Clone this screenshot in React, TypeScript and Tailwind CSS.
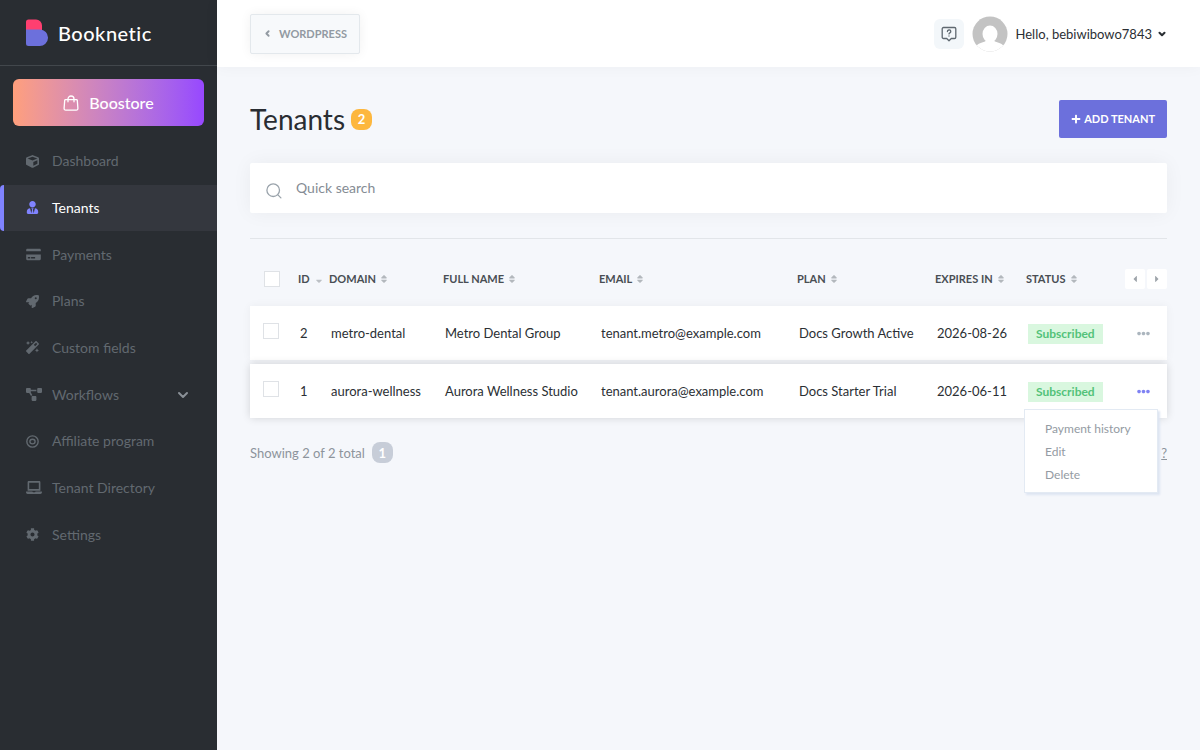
import type { ReactNode } from "react";
import { FaCube, FaUserTie, FaCreditCard, FaRocket, FaMagic, FaProjectDiagram, FaLaptop, FaCog, FaPlus, FaSort, FaSortDown, FaCaretLeft, FaCaretRight, FaEllipsisH } from "react-icons/fa";
import { ChevronDown, ChevronLeft } from "lucide-react";

const TargetIcon = () => (
  <svg viewBox="0 0 14 14" className="size-[13px]" fill="none" stroke="currentColor" strokeWidth="1.5" aria-hidden="true">
    <circle cx="7" cy="7" r="6.1" />
    <ellipse cx="7" cy="7" rx="2.8" ry="2.5" />
  </svg>
);

const BagIcon = () => (
  <svg viewBox="0 0 16 16" className="size-4" fill="none" stroke="currentColor" strokeWidth="1.3" strokeLinecap="round" strokeLinejoin="round" aria-hidden="true">
    <path d="M2.600 4.600h10.800q.8 0 .9.800l.6 7.800q.1 1.900-1.700 1.900H2.800q-1.800 0-1.700-1.900l.6-7.800q.1-.8.900-.8z" />
    <path d="M5 6.800V4a3 3 0 0 1 6 0v2.800" />
  </svg>
);

const Logo = () => (
  <svg viewBox="0 0 22 28" className="h-7 w-[22px]" aria-hidden="true">
    <path d="M0 3a2.500 2.500 0 0 1 2.500-2.500H10a6 6 0 0 1 6 6V12H0z" fill="#ff3f70" />
    <path d="M0 10.500h14A8.200 8.200 0 0 1 13.500 27H2.500A2.500 2.500 0 0 1 0 24.500z" fill="#6c70dc" />
  </svg>
);

const HelpIcon = () => (
  <svg viewBox="0 0 16 16" className="size-4" fill="none" stroke="currentColor" strokeWidth="1.300" strokeLinecap="round" strokeLinejoin="round" aria-hidden="true">
    <path d="M2.500 1.500h11a1.300 1.300 0 0 1 1.300 1.300v8.400a1.300 1.300 0 0 1-1.300 1.300H10.300L8 14.800l-2.300-2.300H2.500a1.300 1.300 0 0 1-1.300-1.300V2.800a1.300 1.300 0 0 1 1.300-1.300z" />
    <path d="M6.400 5.500a1.700 1.500 0 1 1 2.500 1.300c-.6.3-.9.6-.9 1.100M8 9.900v.1" />
  </svg>
);

const SearchIcon = () => (
  <svg viewBox="0 0 16 16" className="size-4" fill="none" stroke="currentColor" strokeWidth="1.300" strokeLinecap="round" aria-hidden="true">
    <circle cx="7.200" cy="7.200" r="6.300" />
    <path d="M11.900 11.900l3 3" />
  </svg>
);

const Avatar = () => (
  <svg viewBox="0 0 36 36" className="size-9" role="img" aria-label="User avatar">
    <defs>
      <clipPath id="avatar"><circle cx="18" cy="18" r="17.500" /></clipPath>
    </defs>
    <g clipPath="url(#avatar)">
      <rect width="36" height="36" fill="#c3c3c3" />
      <ellipse cx="18" cy="18" rx="7.500" ry="8.500" fill="#fff" />
      <path d="M1 36c1-7 6-8.500 12-10.500 1-.5 1-1 .5-2.500h9c-.5 1.500-.5 2 .5 2.500 6 2 11 3.500 12 10.500z" fill="#fff" />
    </g>
  </svg>
);

const nav: { label: string; icon: ReactNode; active?: boolean; more?: boolean }[] = [
  { label: "Dashboard", icon: <FaCube className="size-[13px]" /> },
  { label: "Tenants", icon: <FaUserTie className="size-[13px]" />, active: true },
  { label: "Payments", icon: <FaCreditCard className="h-[13px] w-[15px]" /> },
  { label: "Plans", icon: <FaRocket className="size-[13px]" /> },
  { label: "Custom fields", icon: <FaMagic className="size-[13px]" /> },
  { label: "Workflows", icon: <FaProjectDiagram className="h-[13px] w-4" />, more: true },
  { label: "Affiliate program", icon: <TargetIcon /> },
  { label: "Tenant Directory", icon: <FaLaptop className="h-[13px] w-4" /> },
  { label: "Settings", icon: <FaCog className="size-[13px]" /> },
];

const columns = ["DOMAIN", "FULL NAME", "EMAIL", "PLAN", "EXPIRES IN", "STATUS"];

const tenants = [
  { id: 2, domain: "metro-dental", name: "Metro Dental Group", email: "tenant.metro@example.com", plan: "Docs Growth Active", expires: "2026-08-26", open: false },
  { id: 1, domain: "aurora-wellness", name: "Aurora Wellness Studio", email: "tenant.aurora@example.com", plan: "Docs Starter Trial", expires: "2026-06-11", open: true },
];

const checkbox = "block size-4 appearance-none border border-[#dfe2e6] bg-white";

function Sidebar() {
  return (
    <aside className="w-[217px] shrink-0 bg-[#292d32]">
      <a href="#home" className="flex h-[66px] items-center gap-[10px] border-b border-[#42474c] px-[26px] text-white">
        <Logo />
        <span className="text-xl font-medium tracking-wide">Booknetic</span>
      </a>
      <div className="px-[13px] pt-[13px]">
        <button className="flex h-[47px] w-full items-center justify-center gap-[10px] rounded-md bg-linear-to-r from-[#ff9f7c] to-[#9747ff] text-base font-medium text-white">
          <BagIcon />
          Boostore
        </button>
      </div>
      <nav className="mt-3 grid h-[420px] auto-rows-fr text-sm text-[#626970]">
        {nav.map((item) => (
          <a
            key={item.label}
            href="#nav"
            className={
              item.active
                ? "flex items-center rounded-l-sm border-l-4 border-[#8083ff] bg-[#34373e] pr-[26px] pl-[22px] text-white"
                : "flex items-center pr-[26px] pl-[26px]"
            }
          >
            <span className={item.active ? "w-[26px] text-[#8083ff]" : "w-[26px]"}>{item.icon}</span>
            <span className="grow">{item.label}</span>
            {item.more && <ChevronDown className="size-4 text-[#8a9097]" strokeWidth={3} />}
          </a>
        ))}
      </nav>
    </aside>
  );
}

function RowMenu() {
  return (
    <ul className="absolute top-[45px] right-[9px] z-10 h-[84px] w-[134px] border border-[#e3eaf3] bg-white pt-[7px] pl-5 text-left text-[12px] leading-[23px] text-[#949ba3] shadow-[2px_2px_2px_#dde5f2]">
      {["Payment history", "Edit", "Delete"].map((label) => (
        <li key={label}>
          <button>{label}</button>
        </li>
      ))}
    </ul>
  );
}

function TenantTable() {
  return (
    <table className="w-full table-fixed border-separate border-spacing-x-0 border-spacing-y-1 text-left">
      <colgroup>
        <col className="w-[48px]" />
        <col className="w-[31px]" />
        <col className="w-[114px]" />
        <col className="w-[156px]" />
        <col className="w-[198px]" />
        <col className="w-[138px]" />
        <col className="w-[91px]" />
        <col className="w-[97px]" />
        <col className="w-[44px]" />
      </colgroup>
      <thead>
        <tr className="h-[47px] text-[11px] font-bold whitespace-nowrap text-[#494e54]">
          <th className="pl-[14px]">
            <input type="checkbox" aria-label="Select all tenants" className={checkbox} />
          </th>
          <th>
            <button className="flex items-center gap-1 font-bold">
              ID <FaSortDown className="size-[10px] text-[#bcc0c5]" />
            </button>
          </th>
          {columns.map((label) => (
            <th key={label}>
              <button className="flex items-center gap-[3px] font-bold">
                {label} <FaSort className="size-[10px] text-[#b3b8bd]" />
              </button>
            </th>
          ))}
          <th>
            <div className="flex justify-end gap-[2px] text-[#9ea4aa]">
              <button aria-label="Previous columns" className="grid size-5 place-items-center rounded-xs bg-white">
                <FaCaretLeft className="size-[10px]" />
              </button>
              <button aria-label="Next columns" className="grid size-5 place-items-center rounded-xs bg-white">
                <FaCaretRight className="size-[10px]" />
              </button>
            </div>
          </th>
        </tr>
      </thead>
      <tbody>
        {tenants.map((t) => (
          <tr
            key={t.id}
            className={
              t.open
                ? "h-[54px] rounded-xs bg-white shadow-[0_0_8px_rgba(0,0,0,0.15)]"
                : "h-[54px] rounded-xs bg-white shadow-[0_0_10px_rgba(0,0,0,0.05)]"
            }
          >
            <td className="pb-1 pl-[13px]">
              <input type="checkbox" aria-label={`Select ${t.name}`} className={checkbox} />
            </td>
            <td className="pl-[2px]">{t.id}</td>
            <td className="pl-[2px]">{t.domain}</td>
            <td className="pl-[2px]">{t.name}</td>
            <td className="pl-[2px]">{t.email}</td>
            <td className="pl-[2px]">{t.plan}</td>
            <td className="pl-[2px]">{t.expires}</td>
            <td className="pl-[2px]">
              <span className="inline-block bg-[#d9f7df] px-2 text-[12px] leading-5 font-bold text-[#53c279]">Subscribed</span>
            </td>
            <td className="relative">
              <button aria-label={`Actions for ${t.name}`} aria-expanded={t.open} className="ml-[14px] block">
                <FaEllipsisH className={t.open ? "size-[13px] text-[#7f82f3]" : "size-[13px] text-[#abb5be]"} />
              </button>
              {t.open && <RowMenu />}
            </td>
          </tr>
        ))}
      </tbody>
    </table>
  );
}

export default function App() {
  return (
    <div className="flex min-h-screen bg-[#f5f7fb] font-[Lato,sans-serif] text-[13px] leading-5 text-[#2b2f34]">
      <Sidebar />
      <div className="min-w-0 grow">
        <header className="flex h-[67px] items-center justify-between bg-white px-[33px] shadow-[0_0_15px_rgba(0,0,0,0.04)]">
          <button className="flex h-10 items-center gap-[7px] rounded-xs border border-[#e3e8ec] bg-[#f7f9fb] px-3 text-[11px] font-bold text-[#929aa2] shadow-[0_0_12px_rgba(0,0,0,0.06)]">
            <ChevronLeft className="size-[9px]" strokeWidth={5} />
            WORDPRESS
          </button>
          <div className="flex items-center gap-2">
            <button aria-label="Help" className="grid size-[30px] place-items-center rounded-md bg-[#f3f7fa] text-[#5f6870]">
              <HelpIcon />
            </button>
            <Avatar />
            <button className="flex items-center gap-[5px]">
              Hello, bebiwibowo7843
              <ChevronDown className="size-[10px]" strokeWidth={5} />
            </button>
          </div>
        </header>
        <main className="px-[33px] pt-[33px]">
          <div className="flex h-[38px] items-center justify-between">
            <h1 className="flex items-center gap-[6px] text-[28px] text-[#292d32]">
              Tenants
              <span className="grid size-[21px] place-items-center rounded-lg bg-[#fdb73e] text-[13px] font-bold text-white">2</span>
            </h1>
            <button className="flex h-[38px] items-center gap-[3px] rounded-xs bg-[#6c70dc] px-3 text-[11px] font-bold text-white">
              <FaPlus className="size-[10px]" />
              ADD TENANT
            </button>
          </div>
          <label className="mt-[25px] flex h-[50px] items-center gap-[14px] rounded-xs bg-white px-4 text-sm shadow-[0_0_20px_rgba(0,0,0,0.05)]">
            <span className="pt-[6px] text-[#9aa3ab]">
              <SearchIcon />
            </span>
            <input type="search" aria-label="Quick search" placeholder="Quick search" className="grow outline-none placeholder:text-[#858c94]" />
          </label>
          <hr className="mt-[25px] mb-3 border-[#e2e5e9]" />
          <TenantTable />
          <footer className="mt-5 flex items-center justify-between text-[#8d949c]">
            <div className="flex items-center gap-[7px]">
              Showing 2 of 2 total
              <button className="grid size-[21px] place-items-center rounded-lg bg-[#c7cdd8] font-bold text-white">1</button>
            </div>
            <a href="#help" className="underline">?</a>
          </footer>
        </main>
      </div>
    </div>
  );
}
